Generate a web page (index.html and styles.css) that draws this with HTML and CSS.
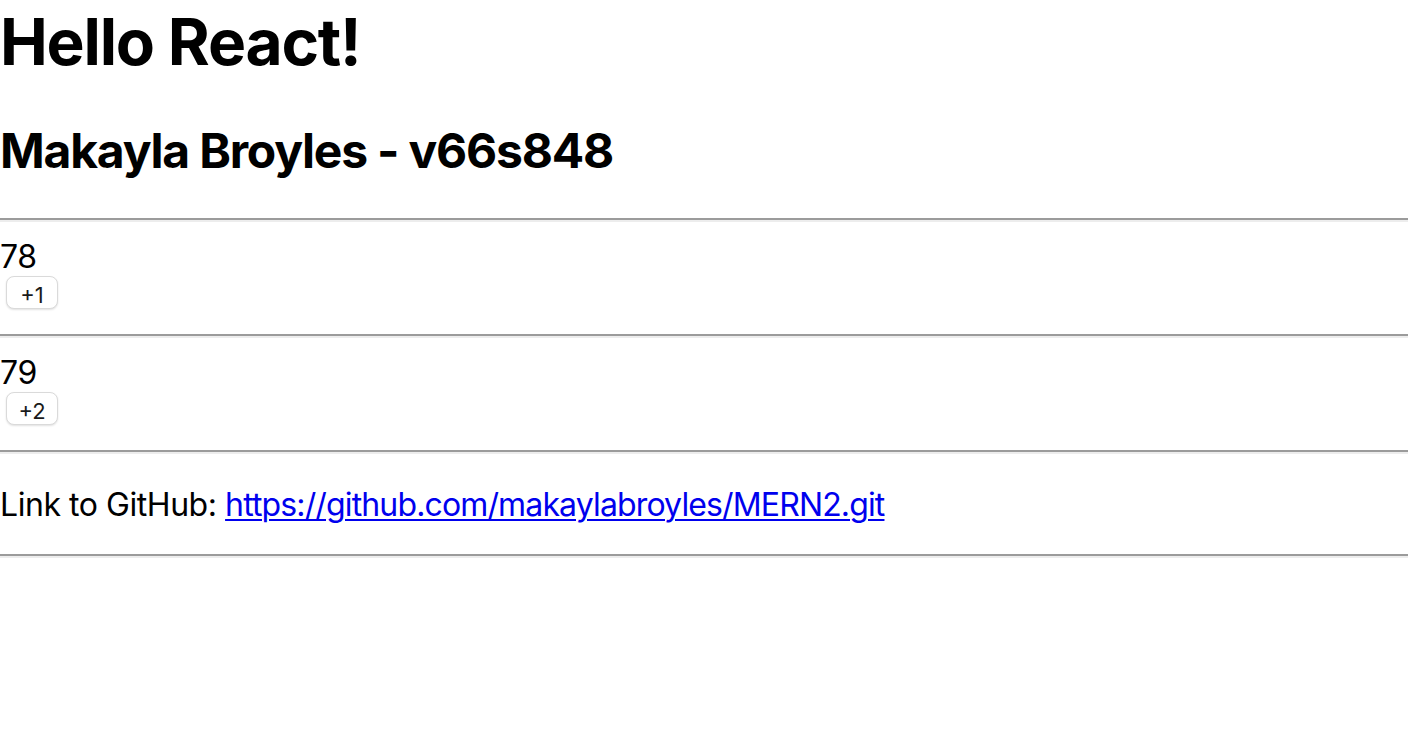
FILE: index.html
```html
<!DOCTYPE html>
<html lang="en">
<head>
<meta charset="utf-8">
<title>Hello React</title>
<link rel="stylesheet" href="styles.css">
</head>
<body>
<div class="app">
  <h1 class="title">Hello React!</h1>
  <h2 class="subtitle">Makayla Broyles - v66s848</h2>
  <hr class="rule rule-first">
  <div class="counter">
    <div class="count">78</div>
    <button class="btn" type="button">+1</button>
  </div>
  <hr class="rule">
  <div class="counter">
    <div class="count">79</div>
    <button class="btn" type="button">+2</button>
  </div>
  <hr class="rule">
  <p class="link-line">Link to GitHub: <a class="gh-link" href="#">https://github.com/makaylabroyles/MERN2.git</a></p>
  <hr class="rule">
</div>
</body>
</html>
```

FILE: styles.css
```css
html, body {
  margin: 0;
  padding: 0;
  background: #ffffff;
}

body {
  font-family: Inter, "Liberation Sans", sans-serif;
  color: #000000;
  font-size: 32px;
}

.app {
  display: flow-root;
}

.title {
  font-size: 64px;
  font-weight: 700;
  line-height: 76px;
  margin: 4px 0 42px 0;
  letter-spacing: -1.2px;
}

.subtitle {
  font-size: 48px;
  font-weight: 700;
  line-height: 58px;
  margin: 0 0 38px 0;
  letter-spacing: -1.2px;
}

.rule {
  height: 0;
  margin: 0;
  border: 0;
  border-top: 2px solid #9b9b9b;
  border-bottom: 2px solid #ededed;
}

.counter {
  padding: 16px 0 25px 0;
}

.count {
  font-size: 32px;
  line-height: 38px;
  letter-spacing: -0.3px;
}

.btn {
  display: block;
  margin: 0 0 0 6px;
  width: 52px;
  height: 33px;
  padding: 4px 0 0 0;
  font-family: Inter, "Liberation Sans", sans-serif;
  font-size: 22px;
  color: #1a1a1a;
  background: #ffffff;
  border: 1px solid #dadada;
  border-radius: 8px;
  box-shadow: 0 1px 2px rgba(0, 0, 0, 0.12);
}

.link-line {
  font-size: 32px;
  line-height: 38px;
  margin: 0;
  padding: 32px 0 30px 0;
  letter-spacing: -0.45px;
}

.gh-link {
  color: #0000ee;
  text-decoration: underline;
  text-decoration-thickness: 2px;
  text-underline-offset: 3px;
  letter-spacing: -0.86px;
}
```
